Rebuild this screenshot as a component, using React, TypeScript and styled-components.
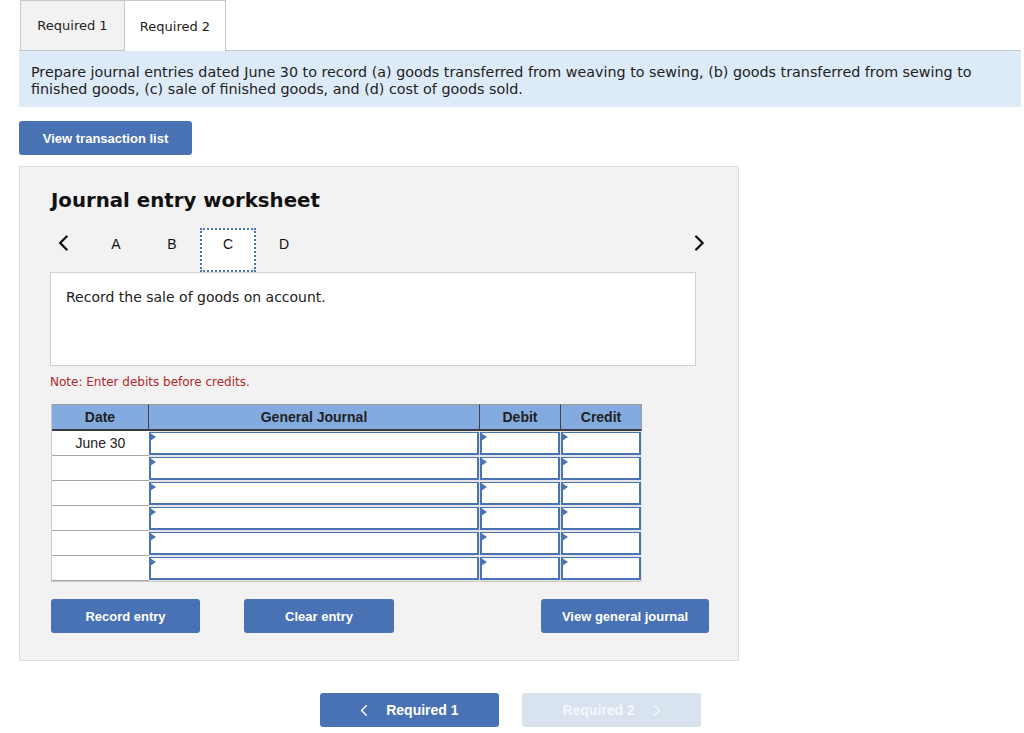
import styled, { createGlobalStyle } from "styled-components"

const Global = createGlobalStyle`
  html, body { margin: 0; padding: 0; background: #fff; }
  body { font-family: "DejaVu Sans", Verdana, sans-serif; color: #222; }
`

const Page = styled.div`
  padding: 0 3px 0 19px;
  width: 1002px;
`

const Tabs = styled.div`
  display: flex;
  height: 50px;
  border-bottom: 1px solid #c8c8c8;
  padding-left: 1px;
`

const Tab = styled.div<{ $active?: boolean }>`
  width: ${p => (p.$active ? "100px" : "103px")};
  display: flex;
  align-items: center;
  justify-content: center;
  font-size: 13px;
  color: #222;
  background: ${p => (p.$active ? "#fff" : "#f2f2f2")};
  border: 1px solid #c8c8c8;
  border-left: ${p => (p.$active ? "none" : "1px solid #c8c8c8")};
  border-bottom: none;
  margin-bottom: ${p => (p.$active ? "-1px" : "0")};
`

const Prompt = styled.div`
  background: #ddeaf7;
  padding: 13px 12px 8px 12px;
  font-size: 14.3px;
  line-height: 17px;
  color: #222;
  height: 35px;
`

const BlueButton = styled.button<{ $w: number; $big?: boolean }>`
  width: ${p => p.$w}px;
  height: 34px;
  background: #4872b3;
  border: none;
  border-radius: 3px;
  color: #fff;
  font-family: "Liberation Sans", Arial, sans-serif;
  font-weight: bold;
  font-size: ${p => (p.$big ? "14px" : "13px")};
  padding: 0;
  display: flex;
  align-items: center;
  justify-content: center;
  gap: 18px;
`

const ViewList = styled(BlueButton)`
  margin-top: 14px;
`

const Worksheet = styled.div`
  margin-top: 11px;
  width: 720px;
  height: 495px;
  background: #f2f2f2;
  border: 1px solid #dcdcdc;
  box-sizing: border-box;
  padding: 0 0 0 30px;
`

const Title = styled.h2`
  margin: 22px 0 0 1px;
  font-size: 19.75px;
  font-weight: bold;
  color: #111;
  line-height: 24px;
`

const Steps = styled.div`
  display: flex;
  align-items: flex-start;
  height: 44px;
  margin-top: 15px;
  width: 660px;
`

const Arrow = styled.div`
  width: 22px;
  height: 30px;
  display: flex;
  align-items: center;
  justify-content: center;
  margin-left: 2px;
`

const Step = styled.div<{ $active?: boolean }>`
  width: 56px;
  height: 44px;
  box-sizing: border-box;
  display: flex;
  align-items: flex-start;
  justify-content: center;
  padding-top: 6px;
  font-family: "Liberation Sans", Arial, sans-serif;
  font-size: 14px;
  line-height: 16px;
  color: #111;
  background: ${p => (p.$active ? "#fff" : "transparent")};
  border: ${p => (p.$active ? "2px dotted #4a74b6" : "2px solid transparent")};
`

const StepList = styled.div`
  display: flex;
  margin-left: 14px;
`

const NextArrow = styled(Arrow)`
  margin-left: auto;
  margin-right: 0;
`

const Description = styled.div`
  width: 646px;
  height: 94px;
  box-sizing: border-box;
  background: #fff;
  border: 1px solid #d0d0d0;
  padding: 16px 15px;
  font-size: 14px;
  color: #222;
`

const Note = styled.div`
  margin-top: 9px;
  font-size: 12px;
  color: #b0282b;
  line-height: 14px;
`

const Table = styled.div`
  margin-top: 15px;
  margin-left: 1px;
  width: 590px;
  display: grid;
  grid-template-columns: 97px 331px 81px 81px;
  border-left: 1px solid #c8c8c8;
  border-bottom: 1px solid #c8c8c8;
`

const Head = styled.div<{ $last?: boolean }>`
  height: 27px;
  box-sizing: border-box;
  background: #84abe0;
  border-top: 1px solid #9a9a9a;
  border-right: 1px solid ${p => (p.$last ? "#9a9a9a" : "#444")};
  border-bottom: 2px solid #3c3c3c;
  display: flex;
  align-items: center;
  justify-content: center;
  font-family: "Liberation Sans", Arial, sans-serif;
  font-weight: bold;
  font-size: 14px;
  color: #222;
`

const DateCell = styled.div`
  height: 25px;
  box-sizing: border-box;
  background: #fff;
  border-bottom: 1px solid #a8a8a8;
  display: flex;
  align-items: center;
  justify-content: center;
  font-family: "Liberation Sans", Arial, sans-serif;
  font-size: 14px;
  color: #222;
`

const InputCell = styled.div`
  height: 25px;
  box-sizing: border-box;
  padding: 1px 1px 1px 0;
  background: #e4e4e4;
  position: relative;
`

const Field = styled.div`
  height: 100%;
  box-sizing: border-box;
  background: #fff;
  border: 2px solid #4a74b6;
  border-top-width: 1px;
`

const Marker = styled.span`
  position: absolute;
  left: 1px;
  top: 2px;
  width: 0;
  height: 0;
  border-top: 4px solid transparent;
  border-bottom: 4px solid transparent;
  border-left: 6px solid #4a74b6;
`

const Actions = styled.div`
  display: flex;
  margin-top: 17px;
  margin-left: 1px;
  width: 658px;
`

const Footer = styled.div`
  display: flex;
  gap: 23px;
  margin-top: 32px;
  margin-left: 301px;
`

const DisabledButton = styled(BlueButton)`
  background: #d9e3ef;
  color: #f4f7fb;
`

const Chevron = ({ dir, size = 18, color = "#111", w = 2.2 }: { dir: "l" | "r"; size?: number; color?: string; w?: number }) => (
  <svg width={size * 0.6} height={size} viewBox="0 0 10 16">
    <path
      d={dir === "l" ? "M8 2 L2 8 L8 14" : "M2 2 L8 8 L2 14"}
      fill="none"
      stroke={color}
      strokeWidth={w}
      strokeLinecap="round"
      strokeLinejoin="round"
    />
  </svg>
)

const rows = ["June 30", "", "", "", "", ""]

export default function App() {
  return (
    <Page>
      <Global />
      <Tabs>
        <Tab>Required 1</Tab>
        <Tab $active>Required 2</Tab>
      </Tabs>
      <Prompt>
        Prepare journal entries dated June 30 to record (a) goods transferred from weaving to sewing, (b) goods transferred from sewing to finished goods, (c) sale of finished goods, and (d) cost of goods sold.
      </Prompt>
      <ViewList $w={173}>View transaction list</ViewList>

      <Worksheet>
        <Title>Journal entry worksheet</Title>
        <Steps>
          <Arrow>
            <Chevron dir="l" />
          </Arrow>
          <StepList>
            <Step>A</Step>
            <Step>B</Step>
            <Step $active>C</Step>
            <Step>D</Step>
          </StepList>
          <NextArrow>
            <Chevron dir="r" />
          </NextArrow>
        </Steps>
        <Description>Record the sale of goods on account.</Description>
        <Note>Note: Enter debits before credits.</Note>

        <Table>
          <Head>Date</Head>
          <Head>General Journal</Head>
          <Head>Debit</Head>
          <Head $last>Credit</Head>
          {rows.map((d, i) => (
            <>
              <DateCell key={`d${i}`}>{d}</DateCell>
              <InputCell key={`g${i}`}>
                <Field />
                <Marker />
              </InputCell>
              <InputCell key={`db${i}`}>
                <Field />
                <Marker />
              </InputCell>
              <InputCell key={`c${i}`}>
                <Field />
                <Marker />
              </InputCell>
            </>
          ))}
        </Table>

        <Actions>
          <BlueButton $w={149}>Record entry</BlueButton>
          <BlueButton $w={150} style={{ marginLeft: 44 }}>Clear entry</BlueButton>
          <BlueButton $w={168} style={{ marginLeft: "auto" }}>View general journal</BlueButton>
        </Actions>
      </Worksheet>

      <Footer>
        <BlueButton $w={179} $big>
          <Chevron dir="l" size={13} color="#fff" w={1.8} />
          <span>Required 1</span>
        </BlueButton>
        <DisabledButton $w={179} $big>
          <span>Required 2</span>
          <Chevron dir="r" size={13} color="#f4f7fb" w={1.8} />
        </DisabledButton>
      </Footer>
    </Page>
  )
}
